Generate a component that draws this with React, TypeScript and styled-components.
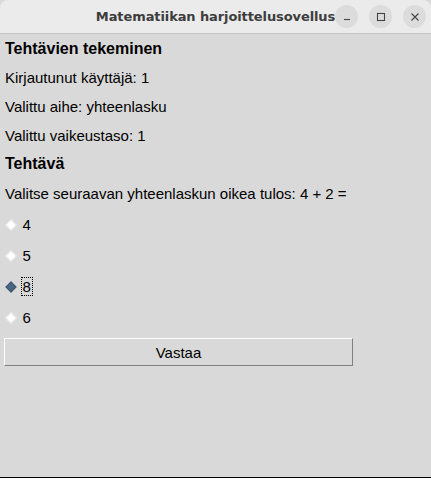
import React from "react";
import styled, { createGlobalStyle } from "styled-components";

const Global = createGlobalStyle`
  html, body { margin: 0; padding: 0; background: #d9d9d9; }
  body { width: 431px; height: 478px; overflow: hidden; }
`;

const Window = styled.div`
  width: 431px;
  height: 478px;
  display: flex;
  flex-direction: column;
  background: #d9d9d9;
  border-bottom: 1px solid #000;
  box-sizing: border-box;
  font-family: "Liberation Sans", Arial, sans-serif;
  color: #000;
`;

const TitleBar = styled.div`
  height: 33px;
  flex: none;
  background: #ebebeb;
  border-bottom: 1px solid #c4c4c4;
  border-radius: 8px 8px 0 0;
  position: relative;
  display: flex;
  align-items: center;
  justify-content: center;
`;

const Title = styled.span`
  font-family: "DejaVu Sans", "Noto Sans", sans-serif;
  font-weight: bold;
  font-size: 13px;
  letter-spacing: -0.1px;
  color: #3d3d3d;
`;

const Controls = styled.div`
  position: absolute;
  right: 5px;
  top: 5px;
  display: flex;
  gap: 11px;
`;

const CtlButton = styled.div`
  width: 23px;
  height: 23px;
  border-radius: 50%;
  background: #dcdcdc;
  display: flex;
  align-items: center;
  justify-content: center;
`;

const Body = styled.div`
  display: flex;
  flex-direction: column;
  padding: 0 5px;
`;

const Heading = styled.div<{ $h?: number }>`
  height: ${(p) => p.$h ?? 29}px;
  display: flex;
  align-items: center;
  font-weight: bold;
  font-size: 16px;
`;

const Line = styled.div<{ $h?: number }>`
  height: ${(p) => p.$h ?? 29}px;
  display: flex;
  align-items: center;
  font-size: 15px;
`;

const RadioRow = styled.div`
  height: 31px;
  display: flex;
  align-items: center;
  font-size: 15px;
  gap: 7px;
`;

const Diamond = styled.span<{ $on?: boolean }>`
  width: 6px;
  height: 6px;
  margin-left: 1.5px;
  transform: rotate(45deg);
  background: ${(p) => (p.$on ? "#4a6584" : "#ffffff")};
  border: 1px solid ${(p) => (p.$on ? "#3f5670" : "#ececec")};
`;

const RadioLabel = styled.span<{ $focus?: boolean }>`
  padding: 0 1px;
  outline: ${(p) => (p.$focus ? "1px dotted #000" : "none")};
  line-height: 17px;
`;

const Button = styled.button`
  margin-top: 5px;
  width: 349px;
  height: 28px;
  margin-left: -1px;
  background: #d9d9d9;
  border: 1px solid;
  border-color: #ffffff #808080 #808080 #ffffff;
  font-family: "Liberation Sans", Arial, sans-serif;
  font-size: 15px;
  color: #000;
  padding: 0;
`;

const options = [
  { label: "4", on: false },
  { label: "5", on: false },
  { label: "8", on: true },
  { label: "6", on: false },
];

export default function App() {
  return (
    <Window>
      <Global />
      <TitleBar>
        <Title>Matematiikan harjoittelusovellus</Title>
        <Controls>
          <CtlButton>
            <svg width="10" height="10" viewBox="0 0 10 10">
              <path d="M2 7.5h6" stroke="#444" strokeWidth="1.1" />
            </svg>
          </CtlButton>
          <CtlButton>
            <svg width="10" height="10" viewBox="0 0 10 10">
              <rect x="1.5" y="1.5" width="7" height="7" fill="none" stroke="#444" strokeWidth="1.1" />
            </svg>
          </CtlButton>
          <CtlButton>
            <svg width="10" height="10" viewBox="0 0 10 10">
              <path d="M1.5 1.5l7 7M8.5 1.5l-7 7" stroke="#444" strokeWidth="1.1" />
            </svg>
          </CtlButton>
        </Controls>
      </TitleBar>
      <Body>
        <Heading>Tehtävien tekeminen</Heading>
        <Line>Kirjautunut käyttäjä: 1</Line>
        <Line>Valittu aihe: yhteenlasku</Line>
        <Line>Valittu vaikeustaso: 1</Line>
        <Heading $h={27}>Tehtävä</Heading>
        <Line $h={32}>Valitse seuraavan yhteenlaskun oikea tulos: 4 + 2 =</Line>
        {options.map((o) => (
          <RadioRow key={o.label}>
            <Diamond $on={o.on} />
            <RadioLabel $focus={o.on}>{o.label}</RadioLabel>
          </RadioRow>
        ))}
        <Button>Vastaa</Button>
      </Body>
    </Window>
  );
}
